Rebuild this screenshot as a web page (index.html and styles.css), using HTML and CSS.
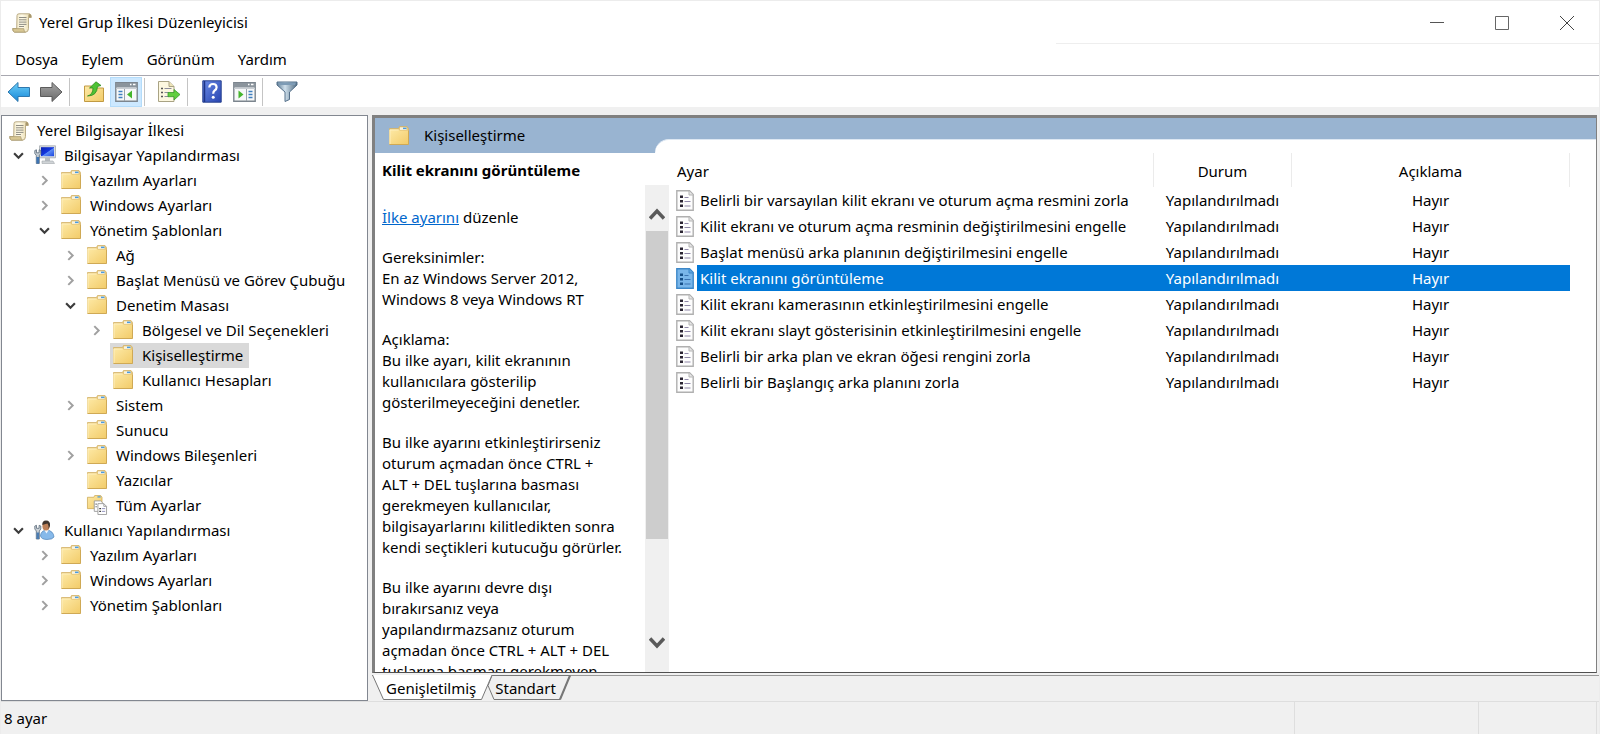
FILE: index.html
```html
<!DOCTYPE html>
<html lang="tr">
<head>
<meta charset="utf-8">
<title>Yerel Grup İlkesi Düzenleyicisi</title>
<link rel="stylesheet" href="styles.css">
</head>
<body>
<svg class="defs" aria-hidden="true">
  <defs>
    <linearGradient id="gFolder" x1="0" y1="0" x2="1" y2="1"><stop offset="0" stop-color="#fde9a6"/><stop offset="1" stop-color="#f2cb68"/></linearGradient>
    <linearGradient id="gPaper" x1="0" y1="0" x2="1" y2="0"><stop offset="0" stop-color="#e9dcb4"/><stop offset=".5" stop-color="#fffbe9"/><stop offset="1" stop-color="#e6d6a6"/></linearGradient>
    <linearGradient id="gBlue" x1="0" y1="0" x2="0" y2="1"><stop offset="0" stop-color="#6fd0f8"/><stop offset="1" stop-color="#1486d8"/></linearGradient>
    <linearGradient id="gGray" x1="0" y1="0" x2="0" y2="1"><stop offset="0" stop-color="#a5a5a5"/><stop offset="1" stop-color="#6a6a6a"/></linearGradient>
    <linearGradient id="gHelp" x1="0" y1="0" x2="1" y2="1"><stop offset="0" stop-color="#6a8be6"/><stop offset="1" stop-color="#2744b0"/></linearGradient>
    <linearGradient id="gFunnel" x1="0" y1="0" x2="1" y2="0"><stop offset="0" stop-color="#5f7c94"/><stop offset=".4" stop-color="#cfe0ec"/><stop offset="1" stop-color="#4f6a80"/></linearGradient>
    <linearGradient id="gScreen" x1="0" y1="0" x2="1" y2="1"><stop offset="0" stop-color="#0a1fb0"/><stop offset=".5" stop-color="#1438e0"/><stop offset=".55" stop-color="#5c8cf4"/><stop offset="1" stop-color="#1c46e0"/></linearGradient>
  </defs>
  <symbol id="folder" viewBox="0 0 20 20">
    <path d="M.5 2.500h9l1-2h7.500l1.500 2V18H.5z" fill="#e6c77c" stroke="#d3b268" stroke-width=".8"/>
    <path d="M11 1.300h6.500v2.600H11z" fill="#f8f3df"/><path d="M14 1.600h3.500v1.500H14z" fill="#4a9be0"/>
    <path d="M.5 3.500h9.100l1.200 1.200h8.700V18.500H.5z" fill="url(#gFolder)"/>
    <path d="M.5 18.500h19V4.700" fill="none" stroke="#cfa955"/><path d="M1 18V4h8.500" fill="none" stroke="#fff3c8" stroke-width=".8"/>
  </symbol>
  <symbol id="scroll" viewBox="0 0 20 20">
    <path d="M5 2.500Q5 .8 7 .8h10.500q2 .4 1.800 3.600h-2.800v11.200q-.2 3.600-3 3.600H2.500Q.5 18.600.7 15.500h4z" fill="url(#gPaper)" stroke="#b3a47c" stroke-width=".9"/>
    <path d="M16.500 4.400q-.6-3 1.200-3.400 1.700.4 1.600 3.400z" fill="#a8976c"/>
    <path d="M.8 15.600h11q0 3 1.700 3.500H2.600Q.6 18.500.8 15.600z" fill="#d8c793" stroke="#a8986e" stroke-width=".7"/>
    <path d="M7 4.500h7.500M7 6.800h7.500M7 9.100h7.500M7 11.400h7.500M7 13.500h5" stroke="#8f8d84" stroke-width="1"/>
  </symbol>
  <symbol id="computer" viewBox="0 0 22 20">
    <path d="M5.500.8h16v12h-16z" fill="#d9dde0" stroke="#a6abb0" stroke-width=".8"/><path d="M7 2.200h13v9H7z" fill="url(#gScreen)"/>
    <path d="M11 13h5v3h-5z" fill="#b9bec3"/><path d="M8 16h11l1.500 2.500H8z" fill="#d0d4d7" stroke="#a2a7ab" stroke-width=".6"/>
    <path d="M.8 5.500v3l1.500 2v8h3v-8l1.500-2v-3l-1.700-.7v3H2.500v-3z" fill="#c4ccd3" stroke="#59697a" stroke-width=".8"/><path d="M2.500 12h2.600v6.500H2.500z" fill="#3d74b4"/>
  </symbol>
  <symbol id="user" viewBox="0 0 22 20">
    <path d="M6.500 16q0-5 6-6.200 7 1 7.500 7.200-1.500 2.500-7 2.500t-6.500-3.500z" fill="#86b9ea" stroke="#4f82b8" stroke-width=".7"/>
    <path d="M10 9.500l2.500 4 2.500-4z" fill="#f4f7fa"/><ellipse cx="12" cy="6" rx="3.600" ry="4.500" fill="#bd8058"/><path d="M8.300 5Q8 .5 12 .5q4.600 0 4 5.500l-1.500 3q.3-4-1-5.500-3 .5-5.200 1.500z" fill="#40352e"/>
    <path d="M.8 6v3l1.500 2v8h3v-8l1.500-2V6l-1.700-.7v3H2.500v-3z" fill="#cbd1d6" stroke="#59697a" stroke-width=".8"/><path d="M2.500 12.500h2.600V19H2.500z" fill="#4b7cb2"/>
  </symbol>
  <symbol id="allset" viewBox="0 0 23 22">
    <path d="M1 2.500h7l1-2h6.500L17 2.500V15H1z" fill="url(#gFolder)" stroke="#c9a552" stroke-width=".8"/><path d="M12 1.400h3.500v1.400H12z" fill="#4a9be0"/>
    <path d="M8.500 6.500h7l3 3V18h-10z" fill="#fff" stroke="#9a9a9a"/><path d="M12.500 9.500h6.500l3 3v9h-9.500z" fill="#fff" stroke="#9a9a9a"/><path d="M19 9.500v3h3" fill="none" stroke="#9a9a9a"/>
    <path d="M10 10h1M10 13h1" stroke="#222" stroke-width="1.200"/><path d="M14 15h2M14 18h2" stroke="#444" stroke-width="1.200"/><path d="M17 15h3.500M17 18h3.500" stroke="#8888b8"/>
  </symbol>
  <symbol id="policy" viewBox="0 0 18 21">
    <path d="M.8.800h12.700l3.700 3.700V20.200H.8z" fill="#fdfdfd" stroke="#b0b0b0" stroke-width="1.400"/><path d="M13 1v4h4" fill="#e8e8e8" stroke="#b5b5b5"/>
    <path d="M4 5.500h3v2.600H4zM4 10h3v2.600H4zM4 14.500h3v2.600H4z" fill="#2a2432"/><path d="M8.500 7.500h4M8.500 11.500h6M8.500 16h6" stroke="#8f88a8" stroke-width="1.200"/>
  </symbol>
  <symbol id="policySel" viewBox="0 0 18 21">
    <path d="M.8.800h12.700l3.700 3.700V20.200H.8z" fill="#79b6ea" stroke="#3c87c8" stroke-width="1.400"/><path d="M13 1v4h4" fill="#62a5de" stroke="#3c87c8"/>
    <path d="M4 5.500h3v2.600H4zM4 10h3v2.600H4zM4 14.500h3v2.600H4z" fill="#154f88"/><path d="M8.500 7.500h4M8.500 11.500h6M8.500 16h6" stroke="#3a72b0" stroke-width="1.200"/>
  </symbol>
  <symbol id="right" viewBox="0 0 10 10"><path d="M3 1l4 4-4 4" fill="none" stroke="#a0a0a0" stroke-width="1.800"/></symbol>
  <symbol id="down" viewBox="0 0 10 10"><path d="M1 3l4 4 4-4" fill="none" stroke="#3c3c3c" stroke-width="2"/></symbol>
</svg>

<header class="titlebar">
  <svg class="i20"><use href="#scroll"/></svg>
  <h1 class="title">Yerel Grup İlkesi Düzenleyicisi</h1>
  <div class="winbtns">
    <button aria-label="Simge durumuna küçült"><svg width="16" height="16"><path d="M1 7.500h14" stroke="#555"/></svg></button>
    <button aria-label="Ekranı kapla"><svg width="16" height="16"><path d="M1.500 1.500h13v13h-13z" fill="none" stroke="#666"/></svg></button>
    <button aria-label="Kapat"><svg width="16" height="16"><path d="M1 1l14 14M15 1L1 15" stroke="#444"/></svg></button>
  </div>
</header>
<nav class="menubar">
  <button>Dosya</button><button>Eylem</button><button>Görünüm</button><button>Yardım</button>
</nav>
<div class="toolbar" role="toolbar">
  <button aria-label="Geri"><svg width="24" height="22" viewBox="0 0 24 22"><path d="M1 11L11 1.500v5h11.500v9H11v5z" fill="url(#gBlue)" stroke="#2f78ae"/></svg></button>
  <button aria-label="İleri"><svg width="24" height="22" viewBox="0 0 24 22"><path d="M23 11L13 1.500v5H1.500v9H13v5z" fill="url(#gGray)" stroke="#5c5c5c"/></svg></button>
  <span class="sep"></span>
  <button aria-label="Yukarı"><svg width="22" height="22" viewBox="0 0 22 22"><path d="M1.500 5h7l1.500 2h10.500v13.500h-19z" fill="url(#gFolder)" stroke="#c19a42"/><path d="M4.500 15Q10 13.500 10 7H6.500L13 .8 18 4.500 14.500 5.500Q14 15 4.500 15z" fill="#4fc234" stroke="#2e8c20" stroke-width=".8"/></svg></button>
  <button class="on" aria-label="Konsol ağacını göster"><svg width="23" height="20" viewBox="0 0 23 20"><path d="M.8.8h21.400v18.400H.8z" fill="#f7f8f9" stroke="#7c858e" stroke-width="1.400"/><path d="M1 1h21v4.500H1z" fill="#8b949c"/><path d="M15 2.500h1.500M18 2.500h2.500" stroke="#fff" stroke-width="1.500"/><path d="M1 6.500h21" stroke="#c8cdd2"/><path d="M9.500 7v12" stroke="#9aa3ab"/><path d="M3.500 9.500h4M3.500 12.500h4M3.500 15.500h4" stroke="#3f7fc0" stroke-width="1.500"/><path d="M17 8.500v8l-5-4z" fill="#45b52c"/></svg></button>
  <span class="sep"></span>
  <button aria-label="Listeyi ver"><svg width="24" height="23" viewBox="0 0 24 23"><path d="M1.500 1.500H12l5 5v15H1.500z" fill="#fdf8e0" stroke="#a9a384"/><path d="M12 1.500v5h5" fill="#eee4b8" stroke="#a9a384"/><path d="M4 8.500h2M4 12.500h2M4 16.500h2" stroke="#555" stroke-width="1.500"/><path d="M7.500 8.500h7M7.500 12.500h4M7.500 16.500h4" stroke="#8d8d9c" stroke-width="1.200"/><path d="M11 12.500h6v-3l6 5-6 5.500v-3.300h-6z" fill="#63cf3f" stroke="#37992a" stroke-width=".8"/></svg></button>
  <span class="sep"></span>
  <button aria-label="Yardım"><svg width="20" height="23" viewBox="0 0 20 23"><path d="M.8.800h18.400v21.400H.8z" fill="url(#gHelp)" stroke="#27408f"/><path d="M2.500 1v21" stroke="#1e3486" stroke-width="1.500"/><path d="M7.300 7.500Q7.500 4 11 4t3.600 3.300q0 2-2 3.200-1.400.9-1.400 3.300" fill="none" stroke="#fff" stroke-width="2.200"/><circle cx="11.200" cy="17.300" r="1.500" fill="#fff"/></svg></button>
  <button aria-label="Eylem bölmesini göster"><svg width="23" height="20" viewBox="0 0 23 20"><path d="M.8.800h21.400v18.400H.8z" fill="#f7f8f9" stroke="#7c858e" stroke-width="1.400"/><path d="M1 1h21v4.500H1z" fill="#8b949c"/><path d="M15 2.500h1.500M18 2.500h2.500" stroke="#fff" stroke-width="1.500"/><path d="M1 6.500h21" stroke="#c8cdd2"/><path d="M13.500 7v12" stroke="#9aa3ab"/><path d="M15.500 9.500h4M15.500 12.500h4M15.500 15.500h4" stroke="#3f7fc0" stroke-width="1.500"/><path d="M5.500 8.500v8l5-4z" fill="#45b52c"/></svg></button>
  <span class="sep"></span>
  <button aria-label="Filtre"><svg width="22" height="21" viewBox="0 0 22 21"><path d="M1 1h20v3l-7.500 7v7.500L9 20.500V11L1 4z" fill="url(#gFunnel)" stroke="#55708a"/><path d="M2 1.500h18l-1 2.500H3z" fill="#7d9bb5"/></svg></button>
</div>

<main class="workspace">
  <nav class="tree" aria-label="Konsol ağacı">
    <div class="node root"><svg class="i20"><use href="#scroll"/></svg><span>Yerel Bilgisayar İlkesi</span></div>
    <ul>
      <li>
        <div class="node"><button class="tw"><svg><use href="#down"/></svg></button><svg class="i22"><use href="#computer"/></svg><span>Bilgisayar Yapılandırması</span></div>
        <ul>
          <li><div class="node"><button class="tw"><svg><use href="#right"/></svg></button><svg class="i22"><use href="#folder"/></svg><span>Yazılım Ayarları</span></div></li>
          <li><div class="node"><button class="tw"><svg><use href="#right"/></svg></button><svg class="i22"><use href="#folder"/></svg><span>Windows Ayarları</span></div></li>
          <li>
            <div class="node"><button class="tw"><svg><use href="#down"/></svg></button><svg class="i22"><use href="#folder"/></svg><span>Yönetim Şablonları</span></div>
            <ul>
              <li><div class="node"><button class="tw"><svg><use href="#right"/></svg></button><svg class="i22"><use href="#folder"/></svg><span>Ağ</span></div></li>
              <li><div class="node"><button class="tw"><svg><use href="#right"/></svg></button><svg class="i22"><use href="#folder"/></svg><span>Başlat Menüsü ve Görev Çubuğu</span></div></li>
              <li>
                <div class="node"><button class="tw"><svg><use href="#down"/></svg></button><svg class="i22"><use href="#folder"/></svg><span>Denetim Masası</span></div>
                <ul>
                  <li><div class="node"><button class="tw"><svg><use href="#right"/></svg></button><svg class="i22"><use href="#folder"/></svg><span>Bölgesel ve Dil Seçenekleri</span></div></li>
                  <li><div class="node"><i class="tw"></i><span class="picked"><svg class="i22"><use href="#folder"/></svg><span>Kişiselleştirme</span></span></div></li>
                  <li><div class="node"><i class="tw"></i><svg class="i22"><use href="#folder"/></svg><span>Kullanıcı Hesapları</span></div></li>
                </ul>
              </li>
              <li><div class="node"><button class="tw"><svg><use href="#right"/></svg></button><svg class="i22"><use href="#folder"/></svg><span>Sistem</span></div></li>
              <li><div class="node"><i class="tw"></i><svg class="i22"><use href="#folder"/></svg><span>Sunucu</span></div></li>
              <li><div class="node"><button class="tw"><svg><use href="#right"/></svg></button><svg class="i22"><use href="#folder"/></svg><span>Windows Bileşenleri</span></div></li>
              <li><div class="node"><i class="tw"></i><svg class="i22"><use href="#folder"/></svg><span>Yazıcılar</span></div></li>
              <li><div class="node"><i class="tw"></i><svg class="i22"><use href="#allset"/></svg><span>Tüm Ayarlar</span></div></li>
            </ul>
          </li>
        </ul>
      </li>
      <li>
        <div class="node"><button class="tw"><svg><use href="#down"/></svg></button><svg class="i22"><use href="#user"/></svg><span>Kullanıcı Yapılandırması</span></div>
        <ul>
          <li><div class="node"><button class="tw"><svg><use href="#right"/></svg></button><svg class="i22"><use href="#folder"/></svg><span>Yazılım Ayarları</span></div></li>
          <li><div class="node"><button class="tw"><svg><use href="#right"/></svg></button><svg class="i22"><use href="#folder"/></svg><span>Windows Ayarları</span></div></li>
          <li><div class="node"><button class="tw"><svg><use href="#right"/></svg></button><svg class="i22"><use href="#folder"/></svg><span>Yönetim Şablonları</span></div></li>
        </ul>
      </li>
    </ul>
  </nav>

  <section class="result">
    <div class="frame">
      <div class="banner">
        <h2 class="banner-title"><svg class="i20"><use href="#folder"/></svg><span>Kişiselleştirme</span></h2>
        <div class="cutout"></div>
      </div>
      <div class="content">
        <article class="details">
          <h3>Kilit ekranını görüntüleme</h3>
          <div class="scroller">
            <div class="text">
              <p><a href="#">İlke ayarını</a> düzenle</p>
              <p>Gereksinimler:<br>En az Windows Server 2012,<br>Windows 8 veya Windows RT</p>
              <p>Açıklama:<br>Bu ilke ayarı, kilit ekranının<br>kullanıcılara gösterilip<br>gösterilmeyeceğini denetler.</p>
              <p>Bu ilke ayarını etkinleştirirseniz<br>oturum açmadan önce CTRL +<br>ALT + DEL tuşlarına basması<br>gerekmeyen kullanıcılar,<br>bilgisayarlarını kilitledikten sonra<br>kendi seçtikleri kutucuğu görürler.</p>
              <p>Bu ilke ayarını devre dışı<br>bırakırsanız veya<br>yapılandırmazsanız oturum<br>açmadan önce CTRL + ALT + DEL<br>tuşlarına basması gerekmeyen</p>
            </div>
            <div class="scrollbar">
              <button aria-label="Yukarı kaydır"><svg width="16" height="12"><path d="M1 10.500L8 3l7 7.500" fill="none" stroke="#5a5a5a" stroke-width="3.500"/></svg></button>
              <div class="track"><div class="thumb"></div></div>
              <button aria-label="Aşağı kaydır"><svg width="16" height="12"><path d="M1 1.500L8 9l7-7.500" fill="none" stroke="#5a5a5a" stroke-width="3.500"/></svg></button>
            </div>
          </div>
        </article>
        <div class="list">
          <table>
            <colgroup><col class="c-icon"><col><col class="c-state"><col class="c-note"></colgroup>
            <thead><tr><th colspan="2" class="name">Ayar</th><th>Durum</th><th>Açıklama</th></tr></thead>
            <tbody>
              <tr><td><svg class="doc"><use href="#policy"/></svg></td><td>Belirli bir varsayılan kilit ekranı ve oturum açma resmini zorla</td><td>Yapılandırılmadı</td><td>Hayır</td></tr>
              <tr><td><svg class="doc"><use href="#policy"/></svg></td><td>Kilit ekranı ve oturum açma resminin değiştirilmesini engelle</td><td>Yapılandırılmadı</td><td>Hayır</td></tr>
              <tr><td><svg class="doc"><use href="#policy"/></svg></td><td>Başlat menüsü arka planının değiştirilmesini engelle</td><td>Yapılandırılmadı</td><td>Hayır</td></tr>
              <tr class="selected"><td><svg class="doc"><use href="#policySel"/></svg></td><td>Kilit ekranını görüntüleme</td><td>Yapılandırılmadı</td><td>Hayır</td></tr>
              <tr><td><svg class="doc"><use href="#policy"/></svg></td><td>Kilit ekranı kamerasının etkinleştirilmesini engelle</td><td>Yapılandırılmadı</td><td>Hayır</td></tr>
              <tr><td><svg class="doc"><use href="#policy"/></svg></td><td>Kilit ekranı slayt gösterisinin etkinleştirilmesini engelle</td><td>Yapılandırılmadı</td><td>Hayır</td></tr>
              <tr><td><svg class="doc"><use href="#policy"/></svg></td><td>Belirli bir arka plan ve ekran öğesi rengini zorla</td><td>Yapılandırılmadı</td><td>Hayır</td></tr>
              <tr><td><svg class="doc"><use href="#policy"/></svg></td><td>Belirli bir Başlangıç arka planını zorla</td><td>Yapılandırılmadı</td><td>Hayır</td></tr>
            </tbody>
          </table>
        </div>
      </div>
    </div>
    <div class="tabs" role="tablist">
      <svg class="tabshape" width="200" height="26" aria-hidden="true"><path d="M120 .5h78l-10 24h-66l-6-14z" fill="#f0f0f0" stroke="#777"/><path d="M198 .5l-10 24" stroke="#777" stroke-width="2"/><path d="M.5 0l11 24.500h98L120 0z" fill="#fff"/><path d="M.5 0l11 24.500h98L120 0" fill="none" stroke="#777"/></svg>
      <button role="tab" aria-selected="true">Genişletilmiş</button>
      <button role="tab">Standart</button>
    </div>
  </section>
</main>
<footer class="status"><span class="count">8 ayar</span><span class="cell"></span><span class="cell last"></span></footer>
</body>
</html>
```
FILE: styles.css
```css
* { box-sizing: border-box; }
body {
  margin: 0;
  height: 100vh;
  display: flex;
  flex-direction: column;
  overflow: hidden;
  background: #f0f0f0;
  border: 1px solid #ececec;
  border-bottom: 0;
  color: #000;
  font: 15px/21px "Noto Sans", "Open Sans", sans-serif;
}
button {
  border: 0;
  padding: 0;
  background: none;
  color: inherit;
  font: inherit;
}
svg { display: block; flex: none; }
h1, h2, h3, p, ul { margin: 0; padding: 0; font-weight: 400; font-size: inherit; }
ul { list-style: none; }
.defs { position: absolute; width: 0; height: 0; }
.i20 { width: 20px; height: 20px; }
.i22 { width: 22px; height: 20px; }

.titlebar {
  display: flex;
  align-items: center;
  height: 43px;
  flex: none;
  padding-left: 11px;
  gap: 7px;
  background: #fff linear-gradient(#eee, #eee) right bottom / 34% 1px no-repeat;
}
.winbtns { display: flex; margin-left: auto; }
.winbtns button { width: 65px; height: 42px; display: grid; place-items: center; }

.menubar { display: flex; height: 31px; flex: none; padding-left: 14px; gap: 23px; background: #fff; }

.toolbar {
  display: flex;
  align-items: center;
  height: 32px;
  flex: none;
  padding-left: 2px;
  background: #fff;
  border-top: 1px solid #a8a8b0;
}
.toolbar button { width: 32px; height: 30px; display: grid; place-items: center; }
.toolbar .on { background: #cce8ff; border: 1px solid #b4dcfa; }
.sep { width: 1px; height: 28px; margin: 0 4px 0 2px; background: #c4c4c4; }
.sep + button { margin-left: 4px; }

.workspace { display: flex; flex: 1; min-height: 0; padding: 8px 0 0; gap: 4px; }
.tree {
  width: 367px;
  flex: none;
  padding: 2px 0 0 6px;
  overflow: hidden;
  background: #fff;
  border: 1px solid #828790;
}
.node { display: flex; align-items: center; height: 25px; white-space: nowrap; }
.node span { margin-left: 8px; }
.node .i22 { margin-bottom: 2px; }
.root { padding-left: 1px; }
.node .picked { display: flex; align-items: center; height: 25px; margin: 0 0 0 -2px; padding: 0 6px 0 2px; background: #d9d9d9; }
.tree ul ul { padding-left: 26px; }
.tw { width: 20px; height: 20px; margin-right: 6px; display: grid; place-items: center; flex: none; }
.tw svg { width: 11px; height: 11px; }

.result { flex: 1; min-width: 0; display: flex; flex-direction: column; }
.frame {
  flex: 1;
  min-height: 0;
  display: flex;
  flex-direction: column;
  margin-right: 2px;
  background: #fff;
  border: solid #808080;
  border-width: 3px 1px 1px 3px;
  border-bottom-color: #505050;
}
.banner { display: flex; justify-content: space-between; height: 35px; flex: none; background: #99b4d1; }
.banner-title { width: 280px; display: flex; align-items: center; padding-left: 14px; gap: 15px; flex: none; }
.cutout { flex: 1; align-self: flex-end; height: 14px; background: #fff; border-top: 1px solid #dde7f2; border-top-left-radius: 14px; }

.content { flex: 1; min-height: 0; display: flex; }
.details { width: 294px; flex: none; display: flex; flex-direction: column; }
.details h3 { height: 32px; padding-left: 7px; font-weight: 700; line-height: 34px; flex: none; }
.scroller { flex: 1; min-height: 0; display: flex; }
.text { flex: 1; padding: 22px 0 0 7px; overflow: hidden; white-space: nowrap; }
.text p { margin-bottom: 19px; }
.text a { color: #0066cc; }
.scrollbar { width: 24px; display: flex; flex-direction: column; background: #f0f0f0; }
.scrollbar button { height: 46px; display: grid; place-items: center; padding-top: 12px; }
.scrollbar button:last-child { padding: 0 0 12px; }
.track { flex: 1; padding: 0 1px; }
.thumb { height: 78%; background: #cdcdcd; }

.list { flex: 1; min-width: 0; padding-right: 26px; }
table { width: 100%; border-collapse: collapse; table-layout: fixed; }
th { height: 34px; padding: 2px 0 0; font-weight: 400; border-right: 1px solid #ebebeb; }
th.name { padding-left: 8px; text-align: left; }
.c-icon { width: 28px; }
.c-state { width: 138px; }
.c-note { width: 278px; }
td { height: 26px; padding: 0; text-align: center; white-space: nowrap; }
td:nth-child(2) { padding-left: 3px; text-align: left; }
.doc { width: 18px; height: 21px; margin-left: 7px; }
.selected td:not(:first-child) { background: #0078d7; color: #fff; }

.tabs { position: relative; display: flex; height: 26px; flex: none; padding-left: 14px; gap: 19px; border-top: 1px solid #999; margin-top: 2px; }
.tabs button { position: relative; height: 25px; }
.tabshape { position: absolute; left: 0; top: -1px; }

.status { display: flex; height: 33px; flex: none; align-items: center; border-top: 1px solid #dedede; }
.count { flex: 1; padding-left: 3px; }
.cell { width: 184px; height: 100%; border-left: 1px solid #dedede; }
.last { width: 119px; margin-right: 2px; border-right: 1px solid #dedede; }
```
